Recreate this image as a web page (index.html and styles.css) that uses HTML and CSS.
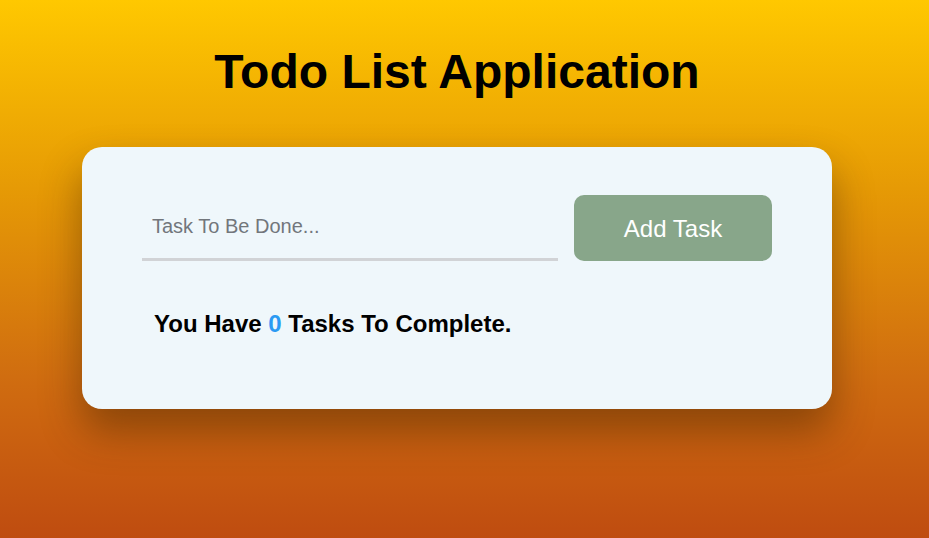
FILE: index.html
```html
<!DOCTYPE html>
<html lang="en">
<head>
<meta charset="utf-8">
<title>Todo List Application</title>
<link rel="stylesheet" href="styles.css">
</head>
<body>
<main class="app">
  <h1 class="title">Todo List Application</h1>
  <section class="card">
    <form class="add-form">
      <input class="task-input" type="text" placeholder="Task To Be Done...">
      <button class="add-btn" type="button">Add Task</button>
    </form>
    <p class="status">You Have <span class="count">0</span> Tasks To Complete.</p>
  </section>
</main>
</body>
</html>
```

FILE: styles.css
```css
html, body {
  margin: 0;
  padding: 0;
}

body {
  min-height: 538px;
  height: 100vh;
  box-sizing: border-box;
  padding-right: 15px;
  background: linear-gradient(to bottom, #ffc800 0%, #e69a05 35%, #d06d10 70%, #bf4c10 100%);
  font-family: "Liberation Sans", Arial, sans-serif;
  color: #000;
}

.app {
  width: 750px;
  margin: 0 auto;
  padding-top: 44px;
}

.title {
  margin: 0 0 48px;
  font-size: 48px;
  font-weight: 700;
  text-align: center;
  line-height: 55px;
}

.card {
  background: #eff7fb;
  border-radius: 20px;
  padding: 48px 60px 71px;
  box-shadow: 0 22px 40px rgba(60, 30, 0, 0.45);
}

.add-form {
  display: flex;
  gap: 16px;
  margin: 0;
}

.task-input {
  flex: 1;
  height: 66px;
  box-sizing: border-box;
  border: none;
  border-bottom: 3px solid #d1d3d6;
  background: transparent;
  padding: 0 10px;
  font-family: "Liberation Sans", Arial, sans-serif;
  font-size: 20px;
  color: #333;
  outline: none;
}

.task-input::placeholder {
  color: #72767b;
}

.add-btn {
  width: 198px;
  height: 66px;
  border: none;
  border-radius: 10px;
  background: #88a68a;
  color: #fff;
  font-family: "Liberation Sans", Arial, sans-serif;
  font-size: 24px;
  padding: 2px 0 0;
  cursor: pointer;
}

.status {
  margin: 49px 0 0 12px;
  font-size: 24px;
  font-weight: 700;
  line-height: 28px;
}

.count {
  color: #2b9af3;
}
```
